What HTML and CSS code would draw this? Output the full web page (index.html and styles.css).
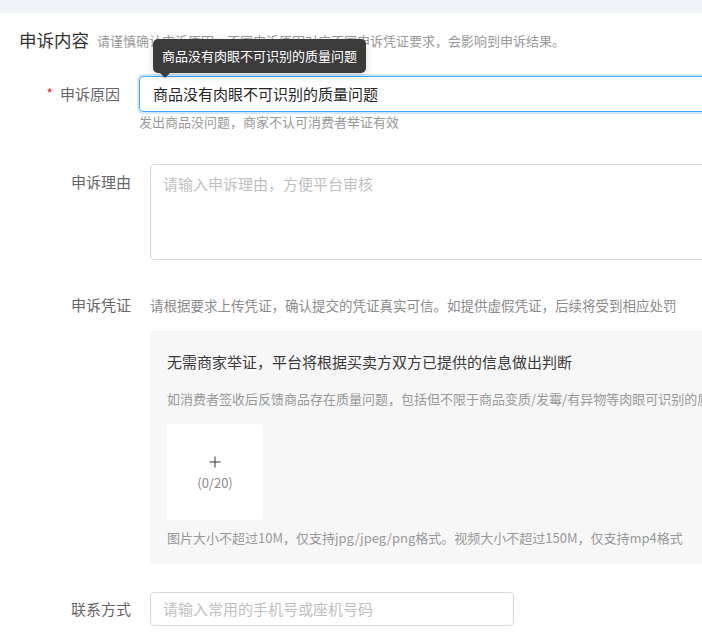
FILE: index.html
```html
<!DOCTYPE html>
<html lang="zh-CN">
<head>
<meta charset="utf-8">
<title>申诉内容</title>
<link rel="stylesheet" href="styles.css">
</head>
<body>
<div class="topbar"></div>
<div class="panel">
  <div class="section-head">
    <h2 class="section-title">申诉内容</h2>
    <span class="section-desc">请谨慎确认申诉原因，不同申诉原因对应不同申诉凭证要求，会影响到申诉结果。</span>
  </div>

  <div class="form-item item-reason">
    <div class="label label-input"><span class="req">*</span>申诉原因</div>
    <div class="control">
      <div class="input-wrap">
        <div class="input input-focused">商品没有肉眼不可识别的质量问题</div>
        <div class="tooltip">商品没有肉眼不可识别的质量问题<span class="tooltip-arrow"></span></div>
      </div>
      <div class="help">发出商品没问题，商家不认可消费者举证有效</div>
    </div>
  </div>

  <div class="form-item item-text">
    <div class="label label-text">申诉理由</div>
    <div class="control">
      <div class="textarea"><span class="placeholder">请输入申诉理由，方便平台审核</span></div>
    </div>
  </div>

  <div class="form-item item-proof">
    <div class="label label-text">申诉凭证</div>
    <div class="control">
      <div class="proof-hint">请根据要求上传凭证，确认提交的凭证真实可信。如提供虚假凭证，后续将受到相应处罚</div>
      <div class="proof-box">
        <div class="proof-title">无需商家举证，平台将根据买卖方双方已提供的信息做出判断</div>
        <div class="proof-desc">如消费者签收后反馈商品存在质量问题，包括但不限于商品变质/发霉/有异物等肉眼可识别的质量问题，平台将直接支持消费者诉求</div>
        <div class="upload">
          <svg class="upload-plus" width="12" height="12" viewBox="0 0 12 12"><path d="M6 0.5V11.5M0.5 6H11.5" stroke="#333" stroke-width="1" fill="none"/></svg>
          <span class="upload-count">(0/20)</span>
        </div>
        <div class="proof-note">图片大小不超过10M，仅支持jpg/jpeg/png格式。视频大小不超过150M，仅支持mp4格式</div>
      </div>
    </div>
  </div>

  <div class="form-item item-contact">
    <div class="label label-input-sm">联系方式</div>
    <div class="control">
      <div class="input input-contact"><span class="placeholder">请输入常用的手机号或座机号码</span></div>
    </div>
  </div>
</div>
</body>
</html>
```

FILE: styles.css
```css
html, body {
  margin: 0;
  padding: 0;
  overflow: hidden;
  background: #fff;
}
body {
  font-family: "Noto Sans CJK SC", "Noto Sans", sans-serif;
  color: #333;
  width: 702px;
  height: 642px;
}
.topbar {
  height: 13px;
  background: #f1f5fb;
}
.panel {
  width: 980px;
  padding: 15px 0 0 0;
}
.section-head {
  display: flex;
  align-items: center;
  padding-left: 19px;
  height: 24px;
}
.section-title {
  margin: 0;
  font-size: 17.5px;
  font-weight: normal;
  line-height: 24px;
  color: #333;
}
.section-desc {
  margin-left: 8px;
  font-size: 13px;
  line-height: 20px;
  color: #999;
  padding-top: 2px;
}
.form-item {
  display: flex;
  align-items: flex-start;
}
.label {
  flex: 0 0 150px;
  box-sizing: border-box;
  padding-right: 19px;
  text-align: right;
  font-size: 15px;
  color: #666;
  white-space: nowrap;
}
.item-reason { margin-top: 24px; }
.item-reason .label { flex-basis: 139px; }
.label-input { line-height: 36px; }
.label-text { line-height: 22px; padding-top: 7px; }
.label-input-sm { line-height: 34px; }
.req {
  color: #f5222d;
  font-size: 14px;
  margin-right: 7px;
  position: relative;
  top: -1px;
}
.control {
  flex: 1;
  min-width: 0;
}
.input-wrap {
  position: relative;
}
.input {
  box-sizing: border-box;
  height: 36px;
  border: 1px solid #d9d9d9;
  border-radius: 4px;
  padding: 0 13px;
  font-size: 15px;
  line-height: 34px;
  color: #262626;
  white-space: nowrap;
}
.input-focused {
  border-color: #40a9ff;
  box-shadow: 0 0 0 2px rgba(24, 144, 255, 0.2);
}
.tooltip {
  position: absolute;
  left: 14px;
  bottom: calc(100% + 3px);
  background: #3b3b3b;
  color: #fff;
  font-size: 13px;
  line-height: 18px;
  padding: 8px 9px 8px 9px;
  border-radius: 5px;
  white-space: nowrap;
  box-shadow: 0 3px 8px rgba(0, 0, 0, 0.15);
}
.tooltip-arrow {
  position: absolute;
  left: 7px;
  top: 100%;
  width: 0;
  height: 0;
  border-left: 5px solid transparent;
  border-right: 5px solid transparent;
  border-top: 5px solid #3b3b3b;
}
.help {
  margin-top: 0;
  font-size: 13px;
  line-height: 20px;
  color: #999;
}
.item-text { margin-top: 32px; }
.textarea {
  box-sizing: border-box;
  height: 96px;
  border: 1px solid #d9d9d9;
  border-radius: 4px;
  padding: 8px 12px;
  font-size: 15px;
  line-height: 22px;
}
.placeholder { color: #bfbfbf; }
.item-proof { margin-top: 27px; }
.proof-hint {
  font-size: 13.5px;
  line-height: 22px;
  padding-top: 7px;
  color: #8c8c8c;
  white-space: nowrap;
}
.proof-box {
  margin-top: 15px;
  background: #f7f7f7;
  border-radius: 4px;
  padding: 20px 17px 16px;
}
.proof-title {
  font-size: 15px;
  line-height: 22px;
  color: #3a3a3a;
  white-space: nowrap;
}
.proof-desc {
  margin-top: 16px;
  font-size: 13px;
  line-height: 20px;
  color: #999;
  white-space: nowrap;
}
.upload {
  margin-top: 15px;
  width: 96px;
  height: 96px;
  box-sizing: border-box;
  background: #fff;
  border-radius: 4px;
  display: flex;
  flex-direction: column;
  align-items: center;
  justify-content: center;
  padding-top: 4px;
}
.upload-plus { display: block; }
.upload-count {
  margin-top: 6px;
  font-size: 13px;
  line-height: 18px;
  color: #8c8c8c;
}
.proof-note {
  margin-top: 8px;
  font-size: 13px;
  line-height: 20px;
  color: #999;
  white-space: nowrap;
}
.item-contact { margin-top: 28px; }
.input-contact {
  width: 364px;
  height: 34px;
  line-height: 32px;
  padding: 0 12px;
}
```
